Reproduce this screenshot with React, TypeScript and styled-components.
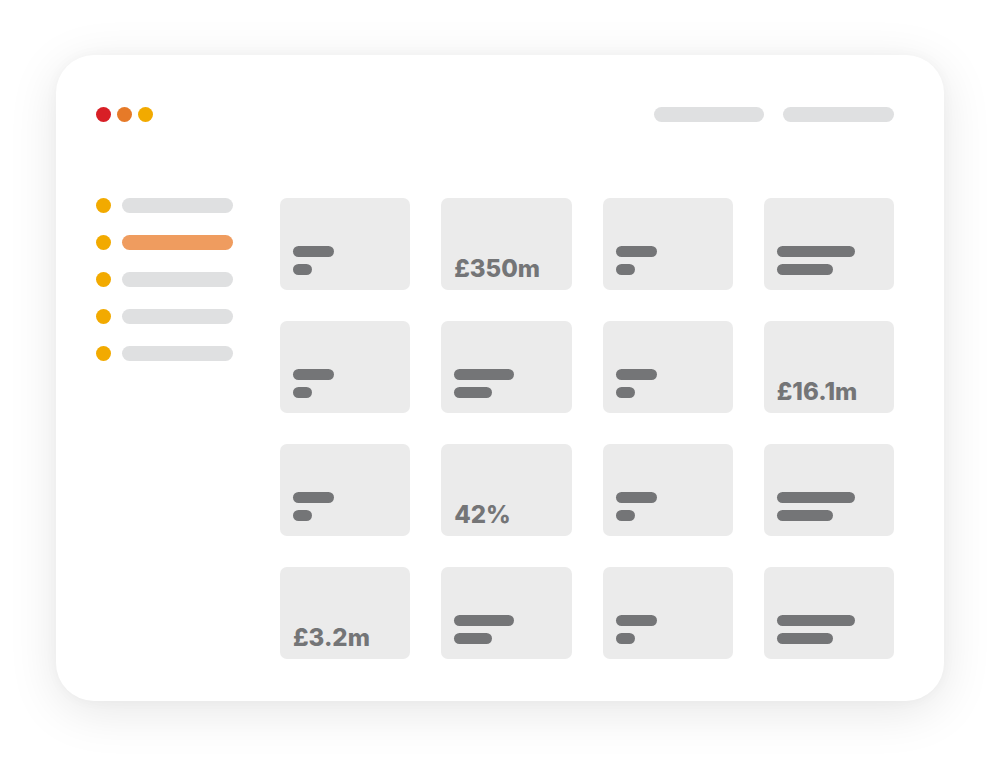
import styled, { createGlobalStyle } from "styled-components";

const GlobalStyle = createGlobalStyle`
  html, body {
    margin: 0;
    padding: 0;
    background: #ffffff;
    font-family: "Inter", "Liberation Sans", sans-serif;
  }
`;

type Tile =
  | { kind: "bars"; size: "short" | "medium" | "long" }
  | { kind: "value"; text: string };

const tiles: Tile[] = [
  { kind: "bars", size: "short" },
  { kind: "value", text: "£350m" },
  { kind: "bars", size: "short" },
  { kind: "bars", size: "long" },
  { kind: "bars", size: "short" },
  { kind: "bars", size: "medium" },
  { kind: "bars", size: "short" },
  { kind: "value", text: "£16.1m" },
  { kind: "bars", size: "short" },
  { kind: "value", text: "42%" },
  { kind: "bars", size: "short" },
  { kind: "bars", size: "long" },
  { kind: "value", text: "£3.2m" },
  { kind: "bars", size: "medium" },
  { kind: "bars", size: "short" },
  { kind: "bars", size: "long" },
];

const barWidths = {
  short: [41, 19],
  medium: [60, 38],
  long: [78, 56],
};

const navItems = [false, true, false, false, false];

export default function App() {
  return (
    <>
      <GlobalStyle />
      <Page>
        <Window>
          <TopBar>
            <Dots>
              <Dot $color="#d81f26" />
              <Dot $color="#e67a28" />
              <Dot $color="#f2aa00" />
            </Dots>
            <TopActions>
              <Pill $width={110} />
              <Pill $width={111} />
            </TopActions>
          </TopBar>
          <Body>
            <Sidebar>
              {navItems.map((active, i) => (
                <NavRow key={i}>
                  <Dot $color="#f2aa00" />
                  <Pill $width={111} $active={active} />
                </NavRow>
              ))}
            </Sidebar>
            <Grid>
              {tiles.map((t, i) => (
                <Card key={i}>
                  {t.kind === "value" ? (
                    <Value>{t.text}</Value>
                  ) : (
                    <Bars>
                      <Bar style={{ width: barWidths[t.size][0] }} />
                      <Bar style={{ width: barWidths[t.size][1] }} />
                    </Bars>
                  )}
                </Card>
              ))}
            </Grid>
          </Body>
        </Window>
      </Page>
    </>
  );
}

const Page = styled.div`
  width: 1000px;
  height: 757px;
  padding: 55px 0 0 56px;
  box-sizing: border-box;
`;

const Window = styled.div`
  width: 888px;
  height: 646px;
  box-sizing: border-box;
  background: #ffffff;
  border-radius: 38px;
  box-shadow: 0 10px 50px rgba(0, 0, 0, 0.1), 0 0 14px rgba(0, 0, 0, 0.03);
  padding: 52px 50px 0 40px;
  display: flex;
  flex-direction: column;
  gap: 76px;
`;

const TopBar = styled.div`
  display: flex;
  justify-content: space-between;
  align-items: center;
  height: 15px;
`;

const Dots = styled.div`
  display: flex;
  gap: 6px;
`;

const Dot = styled.span<{ $color: string }>`
  width: 15px;
  height: 15px;
  border-radius: 50%;
  background: ${(p) => p.$color};
  flex-shrink: 0;
`;

const TopActions = styled.div`
  display: flex;
  gap: 19px;
`;

const Pill = styled.span<{ $width: number; $active?: boolean }>`
  display: block;
  width: ${(p) => p.$width}px;
  height: 15px;
  border-radius: 8px;
  background: ${(p) => (p.$active ? "#ef9c5f" : "#dfe0e1")};
`;

const Body = styled.div`
  display: flex;
  gap: 47px;
`;

const Sidebar = styled.div`
  display: flex;
  flex-direction: column;
  gap: 22px;
  width: 137px;
`;

const NavRow = styled.div`
  display: flex;
  align-items: center;
  gap: 11px;
`;

const Grid = styled.div`
  flex: 1;
  display: grid;
  grid-template-columns: repeat(4, 1fr);
  grid-auto-rows: 92px;
  column-gap: 31px;
  row-gap: 31px;
`;

const Card = styled.div`
  background: #ebebeb;
  border-radius: 7px;
  display: flex;
  flex-direction: column;
  justify-content: flex-end;
  padding: 0 13px 15px;
`;

const Bars = styled.div`
  display: flex;
  flex-direction: column;
  gap: 7px;
`;

const Bar = styled.span`
  display: block;
  height: 11px;
  border-radius: 6px;
  background: #747577;
`;

const Value = styled.div`
  font-family: "Inter", "Liberation Sans", sans-serif;
  font-weight: 800;
  font-size: 24px;
  line-height: 1;
  letter-spacing: 0;
  color: #747577;
  margin-bottom: -6px;
`;
